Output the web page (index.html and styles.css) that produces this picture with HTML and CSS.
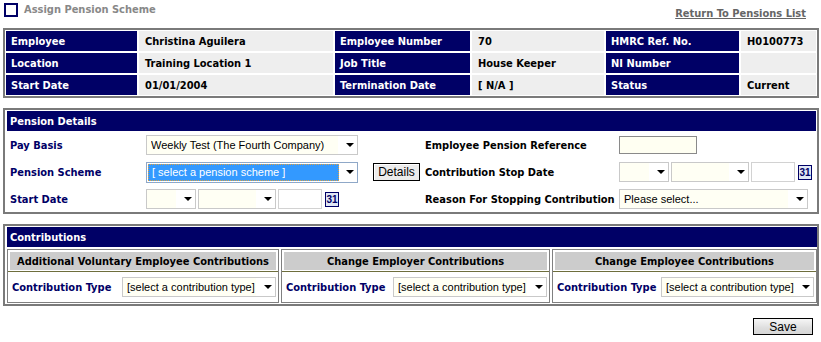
FILE: index.html
```html
<!DOCTYPE html>
<html>
<head>
<meta charset="utf-8">
<link rel="stylesheet" href="styles.css">
</head>
<body>
<div class="page">
  <div class="top">
    <div class="title"><span class="box"></span><span>Assign Pension Scheme</span></div>
    <a class="return" href="#">Return To Pensions List</a>
  </div>

  <div class="emp">
    <div class="lab">Employee</div><div class="val">Christina Aguilera</div>
    <div class="lab">Employee Number</div><div class="val">70</div>
    <div class="lab">HMRC Ref. No.</div><div class="val">H0100773</div>
    <div class="lab">Location</div><div class="val">Training Location 1</div>
    <div class="lab">Job Title</div><div class="val">House Keeper</div>
    <div class="lab">NI Number</div><div class="val"></div>
    <div class="lab">Start Date</div><div class="val">01/01/2004</div>
    <div class="lab">Termination Date</div><div class="val">[ N/A ]</div>
    <div class="lab">Status</div><div class="val">Current</div>
  </div>

  <div class="section pension">
    <div class="sect-h">Pension Details</div>
    <div class="form">
      <div class="flab">Pay Basis</div>
      <div class="field">
        <span class="sel w212"><select><option>Weekly Test (The Fourth Company)</option></select></span>
      </div>
      <div class="rlab">Employee Pension Reference</div>
      <div class="field"><input class="ref" type="text"></div>

      <div class="flab">Pension Scheme</div>
      <div class="field">
        <span class="sel w212 focus"><select><option>[ select a pension scheme ]</option></select></span>
        <button class="details" type="button">Details</button>
      </div>
      <div class="rlab">Contribution Stop Date</div>
      <div class="field">
        <span class="sel w50"><select><option></option></select></span>
        <span class="sel w78"><select><option></option></select></span>
        <input class="txt w44" type="text">
        <span class="cal">31</span>
      </div>

      <div class="flab">Start Date</div>
      <div class="field">
        <span class="sel w50"><select><option></option></select></span>
        <span class="sel w78"><select><option></option></select></span>
        <input class="txt w44" type="text">
        <span class="cal">31</span>
      </div>
      <div class="rlab">Reason For Stopping Contribution</div>
      <div class="field">
        <span class="sel w189"><select><option>Please select...</option></select></span>
      </div>
    </div>
  </div>

  <div class="section contrib">
    <div class="sect-h">Contributions</div>
    <div class="panels">
      <div class="panel p1">
        <div class="ph-wrap"><div class="ph">Additional Voluntary Employee Contributions</div></div>
        <div class="pbody">
          <span class="flab">Contribution Type</span>
          <span class="sel w154"><select><option>[select a contribution type]</option></select></span>
        </div>
      </div>
      <div class="panel p2">
        <div class="ph-wrap"><div class="ph">Change Employer Contributions</div></div>
        <div class="pbody">
          <span class="flab">Contribution Type</span>
          <span class="sel w154"><select><option>[select a contribution type]</option></select></span>
        </div>
      </div>
      <div class="panel p3">
        <div class="ph-wrap"><div class="ph">Change Employee Contributions</div></div>
        <div class="pbody">
          <span class="flab">Contribution Type</span>
          <span class="sel w153"><select><option>[select a contribution type]</option></select></span>
        </div>
      </div>
    </div>
  </div>

  <div class="actions"><button class="save" type="button">Save</button></div>
</div>
</body>
</html>
```

FILE: styles.css
```css
* { box-sizing: border-box; }
body {
  margin: 0;
  font-family: "DejaVu Sans Condensed", "DejaVu Sans", sans-serif;
  font-stretch: condensed;
  font-size: 11px;
  font-weight: bold;
  color: #000;
  background: #fff;
}
.page { width: 819px; padding-left: 3px; }

.top { display: flex; justify-content: space-between; align-items: flex-start; height: 28px; }
.title { display: flex; align-items: center; gap: 6px; margin: 3px 0 0 1px; color: #888; line-height: 14px; }
.box { width: 14px; height: 14px; border: 2px solid #000066; }
.return { margin: 8px 13px 0 0; color: #666; text-decoration: underline; line-height: 12px; }

.emp {
  width: 816px;
  border: 2px solid #7a7a7a;
  padding: 1px;
  display: grid;
  grid-template-columns: 131px 194px 135px 132px 133px 75px;
  grid-auto-rows: 20px;
  gap: 2px;
}
.lab { background: #000066; color: #fff; padding-left: 5px; line-height: 21px; white-space: nowrap; }
.val { background: #eeeeee; color: #000; padding-left: 6px; line-height: 21px; white-space: nowrap; }

.section { width: 816px; border: 2px solid #7a7a7a; margin-top: 10px; }
.pension { padding: 1px 1px 0 2px; }
.contrib { padding: 1px 0 1px 2px; }
.sect-h { background: #000066; color: #fff; height: 20px; line-height: 21px; padding-left: 3px; }

.form {
  display: grid;
  grid-template-columns: 136px 279px 194px 1fr;
  grid-auto-rows: 26px;
  row-gap: 1px;
  align-items: center;
  padding: 1px 0 0 3px;
}
.flab { color: #000066; white-space: nowrap; }
.rlab { color: #000; white-space: nowrap; }
.field { display: flex; align-items: center; gap: 2px; }

.sel { position: relative; display: inline-block; height: 20px; }
.sel select {
  -webkit-appearance: none;
  appearance: none;
  width: 100%;
  height: 20px;
  margin: 0;
  border: 1px solid #c9c9c9;
  border-radius: 0;
  padding: 0 0 0 4px;
  background: linear-gradient(to right, #fffff4 calc(100% - 19px), #ffffff calc(100% - 19px));
  font: 11px "Liberation Sans", Arial, sans-serif;
  color: #000;
  outline: none;
}
.sel::after {
  content: "";
  position: absolute;
  right: 4px;
  top: 8px;
  border-left: 4px solid transparent;
  border-right: 4px solid transparent;
  border-top: 4px solid #000;
  pointer-events: none;
}
.sel.focus { height: 21px; }
.sel.focus select {
  height: 21px;
  border-color: #8fa8c8;
  background: transparent;
  color: #fff;
  position: relative;
  z-index: 1;
  padding-left: 5px;
}
.sel.focus::before {
  content: "";
  position: absolute;
  left: 2px;
  top: 2px;
  right: 19px;
  bottom: 2px;
  background: #3399ff;
  border: 1px dotted #e0a040;
}
.sel.focus::after { z-index: 2; }

.w212 { width: 212px; }
.w50 { width: 50px; }
.w78 { width: 78px; }
.w189 { width: 189px; }
.w154 { width: 154px; }
.w153 { width: 153px; }

.txt { height: 20px; border: 1px solid #d2d2d2; background: #fff; margin: 0; padding: 0; }
.w44 { width: 44px; }
.ref { width: 78px; height: 18px; border: 1px solid #8a8a8a; background: #fffff2; margin: 0; padding: 0; }

.cal {
  width: 14px; height: 15px;
  border: 1px solid #000066;
  background: #dfe6f5;
  color: #000066;
  font: bold 10px "Liberation Sans", Arial, sans-serif;
  line-height: 13px;
  text-align: center;
  margin-left: 1px;
}

.details {
  margin-left: 13px;
  width: 47px; height: 18px;
  border: 1px solid #000;
  background: #ececec;
  box-shadow: inset 1px 1px 0 #fff;
  font: 12px "Liberation Sans", Arial, sans-serif;
  color: #000;
  padding: 0;
}

.panels { display: flex; gap: 2px; margin-top: 2px; }
.panel { border: 1px solid #808080; height: 54px; }
.p1 { width: 272px; }
.p2 { width: 269px; }
.p3 { width: 265px; }
.ph-wrap { padding: 2px 2px 1px; border-bottom: 1px solid #6e6e3c; }
.ph { background: #cccccc; height: 18px; line-height: 19px; text-align: center; white-space: nowrap; }
.pbody { display: flex; align-items: center; justify-content: space-between; height: 31px; padding: 0 2px 1px 4px; }

.actions { display: flex; justify-content: flex-end; padding: 12px 6px 0 0; }
.save {
  width: 60px; height: 17px;
  border: 1px solid #000;
  background: linear-gradient(#f6f6f6, #dedede 60%, #d6d6d6);
  font: 12px "Liberation Sans", Arial, sans-serif;
  color: #000;
  padding: 0;
}
```
